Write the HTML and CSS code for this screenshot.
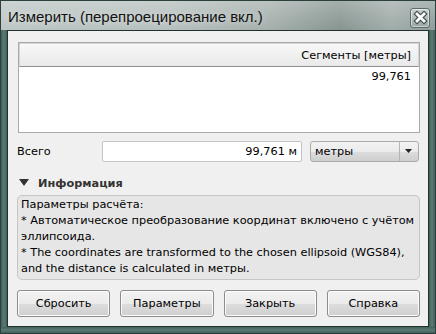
FILE: index.html
```html
<!DOCTYPE html>
<html>
<head>
<meta charset="utf-8">
<link rel="stylesheet" href="styles.css">
</head>
<body>
<div class="window">
  <div class="titlebar">
    <div class="title">Измерить (перепроецирование вкл.)</div>
    <div class="close">
      <svg width="19" height="19" viewBox="0 0 19 19">
        <path d="M6 6 L13 13 M13 6 L6 13" stroke="#3c4a4a" stroke-width="5" stroke-linecap="square"/>
        <path d="M6 6 L13 13 M13 6 L6 13" stroke="#ffffff" stroke-width="2.8" stroke-linecap="square"/>
      </svg>
    </div>
  </div>
  <div class="client">
    <div class="table">
      <div class="thead"><span>Сегменты [метры]</span></div>
      <div class="trow">99,761</div>
    </div>
    <div class="total">
      <span class="label">Всего</span>
      <div class="input">99,761 м</div>
      <div class="combo">
        <span class="combo-text">метры</span>
        <span class="combo-arrow"><svg width="8" height="5" viewBox="0 0 8 5"><path d="M0 0 H7 L3.5 4 Z" fill="#222"/></svg></span>
      </div>
    </div>
    <div class="section">
      <svg class="tri" width="10" height="8" viewBox="0 0 10 8"><path d="M0 0 H10 L5 7 Z" fill="#333"/></svg>
      <span>Информация</span>
    </div>
    <div class="info">
      <div>Параметры расчёта:</div>
      <div>* Автоматическое преобразование координат включено с учётом эллипсоида.</div>
      <div>* The coordinates are transformed to the chosen ellipsoid (WGS84), and the distance is calculated in метры.</div>
    </div>
    <div class="buttons">
      <div class="btn">Сбросить</div>
      <div class="btn">Параметры</div>
      <div class="btn">Закрыть</div>
      <div class="btn">Справка</div>
    </div>
  </div>
</div>
</body>
</html>
```
FILE: styles.css
```css
html, body {
  margin: 0;
  padding: 0;
  width: 436px;
  height: 334px;
  overflow: hidden;
}
body {
  font-family: "DejaVu Sans", Verdana, sans-serif;
  font-size: 11.3px;
  color: #000;
}
.window {
  width: 436px;
  height: 334px;
  box-sizing: border-box;
  background:
    linear-gradient(180deg, rgba(255,255,255,0.25) 0px, rgba(255,255,255,0) 30px),
    linear-gradient(90deg, #bcc6c4 0%, #b4bebc 40%, #a3aeab 62%, #869490 78%, #9fabA8 90%, #8f9c99 100%);
  border: 1px solid #2c3f3c;
  display: flex;
  flex-direction: column;
  padding: 0 6px 6px 6px;
  position: relative;
}
.window::before {
  content: "";
  position: absolute;
  left: 0; right: 0; top: 29px; bottom: 0;
  background: linear-gradient(90deg, #3f5f59 0px, #5d7b75 3px, #3f5f59 6px, transparent 6px, transparent calc(100% - 6px), #3f5f59 calc(100% - 6px), #5d7b75 calc(100% - 3px), #3f5f59 100%);
  pointer-events: none;
}
.window::after {
  content: "";
  position: absolute;
  left: 0; right: 0; bottom: 0; height: 6px;
  background: linear-gradient(180deg, #3f5f59, #5d7b75 50%, #3f5f59);
}
.titlebar {
  height: 29px;
  display: flex;
  align-items: center;
  justify-content: space-between;
  flex: none;
}
.title {
  font-family: "Liberation Sans", Arial, sans-serif;
  font-size: 15px;
  color: #111;
  padding-left: 1px;
  padding-top: 1px;
  text-shadow: 0 0 6px rgba(255,255,255,0.6);
}
.close {
  width: 18px;
  height: 18px;
  margin-top: 4px;
  margin-right: -1px;
  border: 1px solid #5c6b6a;
  border-radius: 3px;
  background: linear-gradient(180deg, #c9d1d0, #9aa6a4);
  box-shadow: inset 0 0 0 1px rgba(255,255,255,0.5);
  display: flex;
  align-items: center;
  justify-content: center;
  overflow: hidden;
}
.close svg { display: block; margin: -1px; }
.client {
  flex: 1;
  background: #f0f0f0;
  border: 1px solid #22302e;
  padding: 11px 8px 0 9px;
  display: flex;
  flex-direction: column;
  position: relative;
  z-index: 1;
}
.table {
  margin-left: 1px;
  height: 91px;
  box-sizing: border-box;
  border: 1px solid #a9a9a9;
  background: #fff;
  display: flex;
  flex-direction: column;
}
.thead {
  height: 24px;
  box-sizing: border-box;
  border: 1px solid #d5d5d5;
  border-bottom: 1px solid #8e8e8e;
  background: linear-gradient(180deg, #f8f8f8, #e9e9e9);
  display: flex;
  align-items: center;
  justify-content: flex-end;
  padding-right: 7px;
}
.trow {
  text-align: right;
  padding-right: 8px;
  padding-top: 2px;
  height: 16px;
  line-height: 16px;
}
.total {
  display: flex;
  align-items: center;
  margin-top: 8px;
  height: 21px;
}
.label {
  width: 85px;
}
.input {
  width: 200px;
  height: 21px;
  box-sizing: border-box;
  border: 1px solid #c5c5c5;
  border-radius: 2px;
  background: #fff;
  text-align: right;
  padding-right: 4px;
  line-height: 19px;
}
.combo {
  margin-left: 8px;
  width: 109px;
  height: 21px;
  box-sizing: border-box;
  border: 1px solid #acacac;
  border-radius: 3px;
  background: linear-gradient(180deg, #f2f2f2 0%, #ebebeb 50%, #dddddd 51%, #cfcfcf 100%);
  display: flex;
  align-items: center;
}
.combo-text {
  flex: 1;
  padding-left: 4px;
}
.combo-arrow {
  width: 18px;
  height: 19px;
  border-left: 1px solid #b5b5b5;
  display: flex;
  align-items: center;
  justify-content: center;
}
.combo-arrow svg { display: block; }
.section {
  display: flex;
  align-items: center;
  height: 16px;
  margin-top: 13px;
  font-weight: bold;
  color: #333;
}
.tri { margin-left: 2px; margin-right: 9px; }
.info {
  margin-top: 4px;
  height: 85px;
  box-sizing: border-box;
  border: 1px solid #c6c6c6;
  border-radius: 5px;
  background: #e6e6e6;
  padding: 1px 3px 0 3px;
  line-height: 16px;
}
.buttons {
  display: flex;
  gap: 10px;
  margin-top: 10px;
  margin-left: 0;
}
.btn {
  flex: 1;
  height: 27px;
  box-sizing: border-box;
  border: 1px solid #8c8c8c;
  border-radius: 3px;
  background: linear-gradient(180deg, #f2f2f2 0%, #ebebeb 50%, #dddddd 51%, #cfcfcf 100%);
  box-shadow: inset 0 0 0 1px #fcfcfc;
  display: flex;
  align-items: center;
  justify-content: center;
}
```
